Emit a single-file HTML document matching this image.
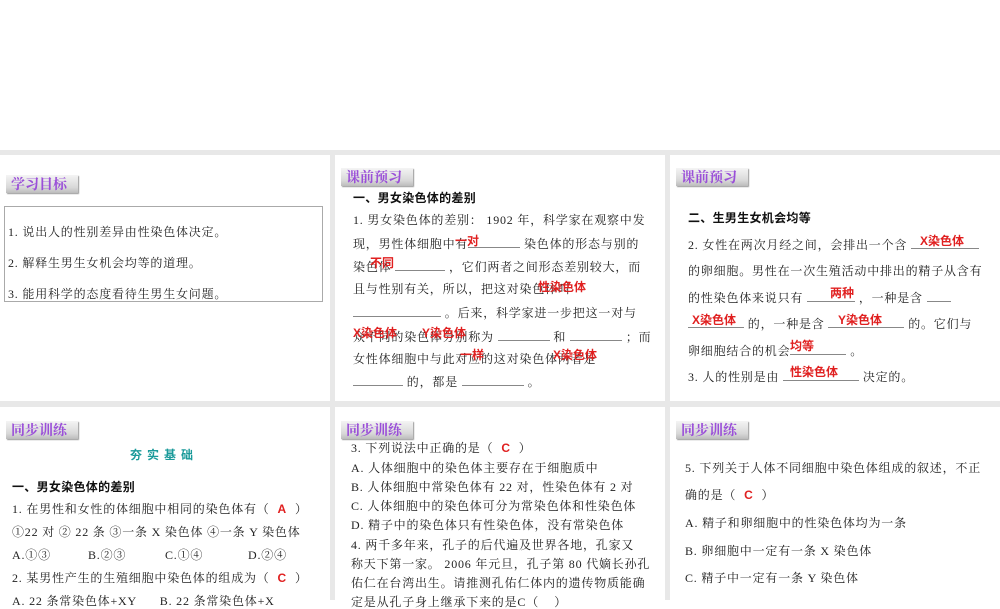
<!DOCTYPE html>
<html><head><meta charset="utf-8"><style>
body{margin:0;width:1000px;height:600px;overflow:hidden;background:#fff;position:relative;font-family:"Liberation Serif","Noto Serif CJK SC",serif;color:#222;}
.g{position:absolute;background:#e8e8e8}
.t{position:absolute;white-space:nowrap;font-size:12px;line-height:14px;letter-spacing:0.8px}
.b{font-family:"Liberation Sans","Noto Sans CJK SC",sans-serif;font-weight:bold;color:#111;letter-spacing:0.3px}
.badge{position:absolute;width:72px;height:18px;background:linear-gradient(#f4f4f4,#d8d8d8 70%,#bcbcbc);box-shadow:1px 1px 1px #999;font-family:"Noto Serif CJK SC",serif;font-weight:bold;color:#9a4fd8;font-size:14px;line-height:18px;padding-left:5px;box-sizing:border-box}
.r{position:absolute;white-space:nowrap;color:#e02020;font-family:"Liberation Sans","Noto Sans CJK SC",sans-serif;font-weight:bold;font-size:12px;line-height:14px}
.u{display:inline-block;border-bottom:1px solid #888;height:11px;vertical-align:baseline}
.rc{color:#e02020;font-family:'Liberation Sans';font-weight:bold}
</style></head><body>
<div class="g" style="left:0;top:150px;width:1000px;height:5px"></div>
<div class="g" style="left:330px;top:155px;width:5px;height:445px"></div>
<div class="g" style="left:665px;top:155px;width:5px;height:445px"></div>
<div class="g" style="left:0;top:401px;width:1000px;height:6px"></div>

<!-- panel 1 -->
<div class="badge" style="left:6px;top:175px">学习目标</div>
<div style="position:absolute;left:4px;top:206px;width:319px;height:96px;border:1px solid #aaa;box-sizing:border-box"></div>
<div class="t" style="left:8px;top:225px">1. 说出人的性别差异由性染色体决定。</div>
<div class="t" style="left:8px;top:256px">2. 解释生男生女机会均等的道理。</div>
<div class="t" style="left:8px;top:287px">3. 能用科学的态度看待生男生女问题。</div>

<!-- panel 2 -->
<div class="badge" style="left:341px;top:168px">课前预习</div>
<div class="t b" style="left:353px;top:191px">一、男女染色体的差别</div>
<div class="t" style="left:353px;top:213px">1. 男女染色体的差别： 1902 年，科学家在观察中发</div>
<div class="t" style="left:353px;top:236px">现，男性体细胞中有<span class="u" style="width:52px"></span> 染色体的形态与别的</div>
<div class="t" style="left:353px;top:259px">染色体 <span class="u" style="width:50px"></span> ，它们两者之间形态差别较大，而</div>
<div class="t" style="left:353px;top:282px">且与性别有关，所以，把这对染色体叫</div>
<div class="t" style="left:353px;top:305px"><span class="u" style="width:88px"></span> 。后来，科学家进一步把这一对与</div>
<div class="t" style="left:353px;top:329px">众不同的染色体分别称为 <span class="u" style="width:52px"></span> 和 <span class="u" style="width:52px"></span> ；而</div>
<div class="t" style="left:353px;top:352px">女性体细胞中与此对应的这对染色体两者是</div>
<div class="t" style="left:353px;top:374px"><span class="u" style="width:50px"></span> 的，都是 <span class="u" style="width:62px"></span> 。</div>
<div class="r" style="left:455px;top:234px">一对</div>
<div class="r" style="left:370px;top:256px">不同</div>
<div class="r" style="left:538px;top:280px">性染色体</div>
<div class="r" style="left:353px;top:326px">X染色体</div>
<div class="r" style="left:422px;top:326px">Y染色体</div>
<div class="r" style="left:460px;top:348px">一样</div>
<div class="r" style="left:553px;top:348px">X染色体</div>

<!-- panel 3 -->
<div class="badge" style="left:676px;top:168px">课前预习</div>
<div class="t b" style="left:688px;top:211px">二、生男生女机会均等</div>
<div class="t" style="left:688px;top:237px">2. 女性在两次月经之间，会排出一个含 <span class="u" style="width:68px"></span></div>
<div class="t" style="left:688px;top:264px">的卵细胞。男性在一次生殖活动中排出的精子从含有</div>
<div class="t" style="left:688px;top:290px">的性染色体来说只有 <span class="u" style="width:48px"></span> ，一种是含 <span class="u" style="width:24px"></span></div>
<div class="t" style="left:688px;top:316px"><span class="u" style="width:56px"></span> 的，一种是含 <span class="u" style="width:76px"></span> 的。它们与</div>
<div class="t" style="left:688px;top:343px">卵细胞结合的机会<span class="u" style="width:56px"></span> 。</div>
<div class="t" style="left:688px;top:369px">3. 人的性别是由 <span class="u" style="width:76px"></span> 决定的。</div>
<div class="r" style="left:920px;top:234px">X染色体</div>
<div class="r" style="left:830px;top:286px">两种</div>
<div class="r" style="left:692px;top:313px">X染色体</div>
<div class="r" style="left:838px;top:313px">Y染色体</div>
<div class="r" style="left:790px;top:339px">均等</div>
<div class="r" style="left:790px;top:365px">性染色体</div>

<!-- panel 4 -->
<div class="badge" style="left:6px;top:421px">同步训练</div>
<div class="t b" style="left:130px;top:448px;color:#1a9a9a;letter-spacing:5px">夯实基础</div>
<div class="t b" style="left:12px;top:480px">一、男女染色体的差别</div>
<div class="t" style="left:12px;top:502px">1. 在男性和女性的体细胞中相同的染色体有（ <span class="rc">&nbsp;A&nbsp;</span> ）</div>
<div class="t" style="left:12px;top:525px">①22 对 ② 22 条 ③一条 X 染色体 ④一条 Y 染色体</div>
<div class="t" style="left:12px;top:548px">A.①③</div><div class="t" style="left:88px;top:548px">B.②③</div><div class="t" style="left:165px;top:548px">C.①④</div><div class="t" style="left:248px;top:548px">D.②④</div>
<div class="t" style="left:12px;top:571px">2. 某男性产生的生殖细胞中染色体的组成为（ <span class="rc">&nbsp;C&nbsp;</span> ）</div>
<div class="t" style="left:12px;top:594px">A. 22 条常染色体+XY&nbsp;&nbsp;&nbsp;&nbsp;&nbsp;&nbsp;B. 22 条常染色体+X</div>

<!-- panel 5 -->
<div class="badge" style="left:341px;top:421px">同步训练</div>
<div class="t" style="left:351px;top:441px">3. 下列说法中正确的是（ <span class="rc">&nbsp;C&nbsp;</span> ）</div>
<div class="t" style="left:351px;top:461px">A. 人体细胞中的染色体主要存在于细胞质中</div>
<div class="t" style="left:351px;top:480px">B. 人体细胞中常染色体有 22 对，性染色体有 2 对</div>
<div class="t" style="left:351px;top:499px">C. 人体细胞中的染色体可分为常染色体和性染色体</div>
<div class="t" style="left:351px;top:518px">D. 精子中的染色体只有性染色体，没有常染色体</div>
<div class="t" style="left:351px;top:538px">4. 两千多年来，孔子的后代遍及世界各地，孔家又</div>
<div class="t" style="left:351px;top:557px">称天下第一家。 2006 年元旦，孔子第 80 代嫡长孙孔</div>
<div class="t" style="left:351px;top:576px">佑仁在台湾出生。请推测孔佑仁体内的遗传物质能确</div>
<div class="t" style="left:351px;top:595px">定是从孔子身上继承下来的是C（&nbsp;&nbsp;&nbsp;&nbsp;）</div>

<!-- panel 6 -->
<div class="badge" style="left:676px;top:421px">同步训练</div>
<div class="t" style="left:685px;top:461px">5. 下列关于人体不同细胞中染色体组成的叙述，不正</div>
<div class="t" style="left:685px;top:488px">确的是（ <span class="rc">&nbsp;C&nbsp;</span> ）</div>
<div class="t" style="left:685px;top:516px">A. 精子和卵细胞中的性染色体均为一条</div>
<div class="t" style="left:685px;top:544px">B. 卵细胞中一定有一条 X 染色体</div>
<div class="t" style="left:685px;top:571px">C. 精子中一定有一条 Y 染色体</div>
</body></html>
